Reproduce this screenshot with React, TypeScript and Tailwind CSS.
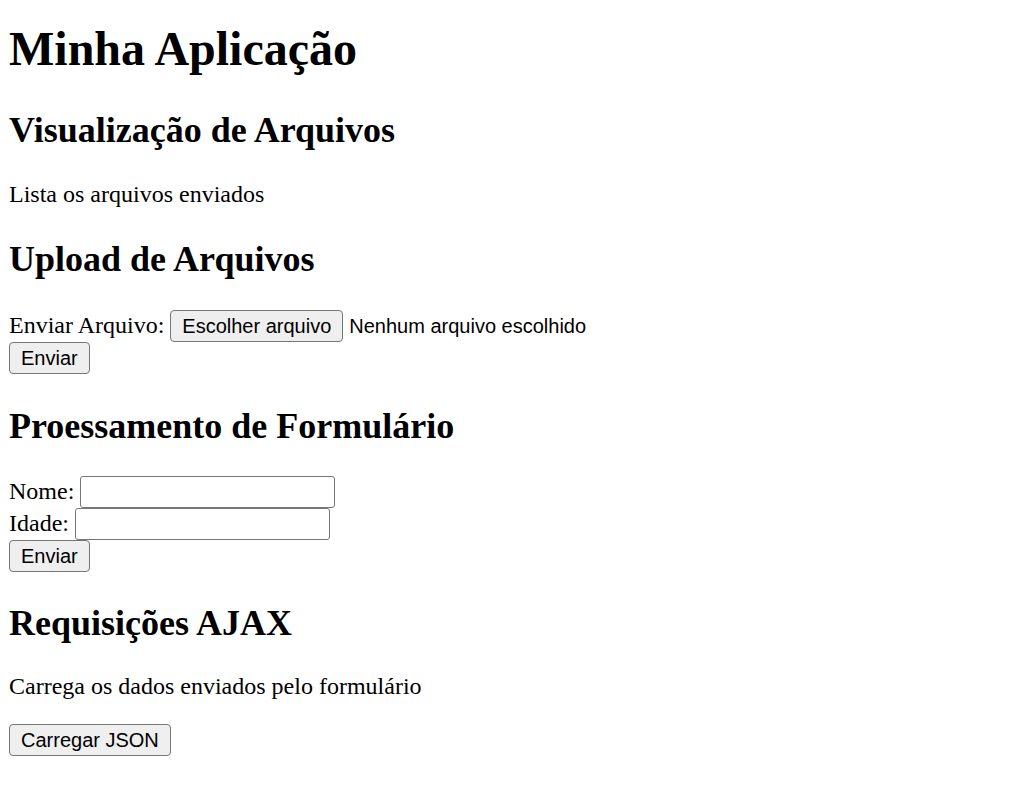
import React from "react"

const btn =
  "inline-block rounded-[4px] border border-[#767676] bg-[#efefef] px-[11px] py-[3.5px] font-['Liberation_Sans',Arial,sans-serif] text-[20px] leading-[normal] text-black"

const field =
  "inline-block h-[32px] w-[255px] rounded-[3px] border border-[#767676] bg-white px-[3px] align-baseline font-['Liberation_Sans',Arial,sans-serif] text-[20px] text-black outline-none"

export default function App() {
  return (
    <div className="min-h-screen bg-white px-[9px] pt-[21px] font-['Liberation_Serif','Times_New_Roman',serif] text-[24px] leading-[normal] text-black">
      <h1 className="mb-[33px] text-[48px] font-bold leading-[normal]">Minha Aplicação</h1>

      {/* Visualização */}
      <h2 className="my-[30px] text-[36px] font-bold leading-[normal]">Visualização de Arquivos</h2>
      <p className="my-[24px]">Lista os arquivos enviados</p>

      {/* Upload */}
      <h2 className="my-[30px] text-[36px] font-bold leading-[normal]">Upload de Arquivos</h2>
      <form onSubmit={(e) => e.preventDefault()}>
        <label>Enviar Arquivo:</label>{" "}
        <span className={btn}>Escolher arquivo</span>
        <span className="ml-[6px] font-['Liberation_Sans',Arial,sans-serif] text-[20px]">Nenhum arquivo escolhido</span>
        <br />
        <button type="submit" className={btn}>
          Enviar
        </button>
      </form>

      {/* Formulário */}
      <h2 className="mt-[31px] mb-[29px] text-[36px] font-bold leading-[normal]">Proessamento de Formulário</h2>
      <form onSubmit={(e) => e.preventDefault()}>
        <label>Nome:</label> <input type="text" className={field} />
        <br />
        <label>Idade:</label> <input type="text" className={field} />
        <br />
        <button type="submit" className={btn}>
          Enviar
        </button>
      </form>

      {/* AJAX */}
      <h2 className="mt-[30px] mb-[29px] text-[36px] font-bold leading-[normal]">Requisições AJAX</h2>
      <p className="my-[24px]">Carrega os dados enviados pelo formulário</p>
      <p className="my-[24px]">
        <button type="button" className={btn}>
          Carregar JSON
        </button>
      </p>
    </div>
  )
}
